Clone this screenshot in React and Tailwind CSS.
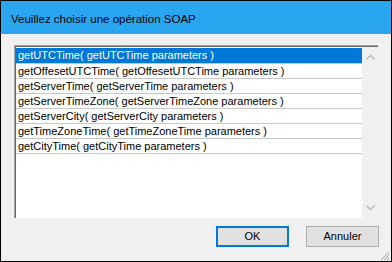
const ops = [
    'getUTCTime( getUTCTime parameters )',
    'getOffesetUTCTime( getOffesetUTCTime parameters )',
    'getServerTime( getServerTime parameters )',
    'getServerTimeZone( getServerTimeZone parameters )',
    'getServerCity( getServerCity parameters )',
    'getTimeZoneTime( getTimeZoneTime parameters )',
    'getCityTime( getCityTime parameters )',
];

function Chevron({ up }) {
    return (
        <svg width="9" height="6" viewBox="0 0 9 6" className="block">
            <path
                d={up ? 'M0.5 5.5 L4.5 1.5 L8.5 5.5' : 'M0.5 0.5 L4.5 4.5 L8.5 0.5'}
                fill="none"
                stroke="#c2c2c2"
                strokeWidth="1.6"
            />
        </svg>
    );
}

export default function App() {
    return (
        <div className="flex h-[262px] w-[392px] flex-col border border-black bg-[#f0f0f0] font-['Liberation_Sans',sans-serif]">
            <div className="flex h-[33px] shrink-0 items-center bg-[#2aa5f0] pl-[10px] pt-[5px] text-[11.5px] text-black">
                Veuillez choisir une opération SOAP
            </div>

            <div className="flex flex-1 flex-col pl-[13px] pr-[12px] pt-[11px]">
                <div className="flex h-[173px] w-[364px] border-l border-t border-[#a0a0a0] border-b-[#f4f4f4] border-r-[#e3e3e3]">
                    <div className="flex flex-1 border-l border-t border-[#696969] bg-white">
                        <div className="flex-1 pt-px">
                            {ops.map((op, i) => (
                                <div
                                    key={op}
                                    className={
                                        i === 0
                                            ? 'h-[15px] overflow-hidden whitespace-nowrap bg-[#0078d7] pl-[2px] text-[11px] leading-[15px] text-white'
                                            : 'h-[15px] overflow-hidden whitespace-nowrap border-t border-[#c8c8c8] pl-[2px] text-[11px] leading-[14px] text-black'
                                    }
                                >
                                    {op}
                                </div>
                            ))}
                            <div className="border-t border-[#c8c8c8]" />
                        </div>
                        <div className="flex w-[16px] flex-col items-center justify-between bg-[#f0f0f0] py-[7px]">
                            <Chevron up />
                            <Chevron />
                        </div>
                    </div>
                </div>

                <div className="mt-[8px] flex justify-end gap-[17px] text-[11px] text-black">
                    <button className="h-[21px] w-[73px] border-2 border-[#0078d7] bg-[#e1e1e1]">
                        OK
                    </button>
                    <button className="h-[21px] w-[73px] border border-[#adadad] bg-[#e1e1e1]">
                        Annuler
                    </button>
                </div>

                <div className="mt-auto flex justify-end">
                    <svg width="11" height="11" viewBox="0 0 11 11" className="-mr-[11px]">
                        <path d="M10 2 L2 10 M10 5 L5 10 M10 8 L8 10" stroke="#a0a0a0" strokeWidth="1" />
                    </svg>
                </div>
            </div>
        </div>
    );
}
